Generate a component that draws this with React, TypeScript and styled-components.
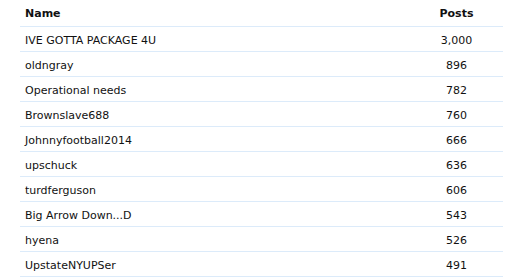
import styled, { createGlobalStyle } from "styled-components";

const GlobalStyle = createGlobalStyle`
  body {
    margin: 0;
    background: #ffffff;
    font-family: "DejaVu Sans", Verdana, sans-serif;
    color: #111111;
  }
`;

const posters = [
  { name: "IVE GOTTA PACKAGE 4U", posts: "3,000" },
  { name: "oldngray", posts: "896" },
  { name: "Operational needs", posts: "782" },
  { name: "Brownslave688", posts: "760" },
  { name: "Johnnyfootball2014", posts: "666" },
  { name: "upschuck", posts: "636" },
  { name: "turdferguson", posts: "606" },
  { name: "Big Arrow Down...D", posts: "543" },
  { name: "hyena", posts: "526" },
  { name: "UpstateNYUPSer", posts: "491" },
];

export default function App() {
  return (
    <>
      <GlobalStyle />
      <Wrapper>
        <Table>
          <HeaderRow>
            <NameCell>Name</NameCell>
            <PostsCell>Posts</PostsCell>
          </HeaderRow>
          {posters.map(({ name, posts }) => (
            <Row key={name}>
              <NameCell>{name}</NameCell>
              <PostsCell>{posts}</PostsCell>
            </Row>
          ))}
        </Table>
      </Wrapper>
    </>
  );
}

const Wrapper = styled.div`
  padding: 0 6px 0 20px;
  width: 509px;
  box-sizing: border-box;
`;

const Table = styled.div`
  display: flex;
  flex-direction: column;
  font-size: 11px;
`;

const Row = styled.div`
  display: grid;
  grid-template-columns: 1fr 93px;
  align-items: center;
  height: 25px;
  padding-top: 2px;
  box-sizing: border-box;
  border-bottom: 1px solid #dcebfa;
`;

const HeaderRow = styled(Row)`
  height: 27px;
  padding-top: 1px;
  font-weight: bold;
`;

const NameCell = styled.div`
  padding-left: 5px;
`;

const PostsCell = styled.div`
  text-align: center;
`;
